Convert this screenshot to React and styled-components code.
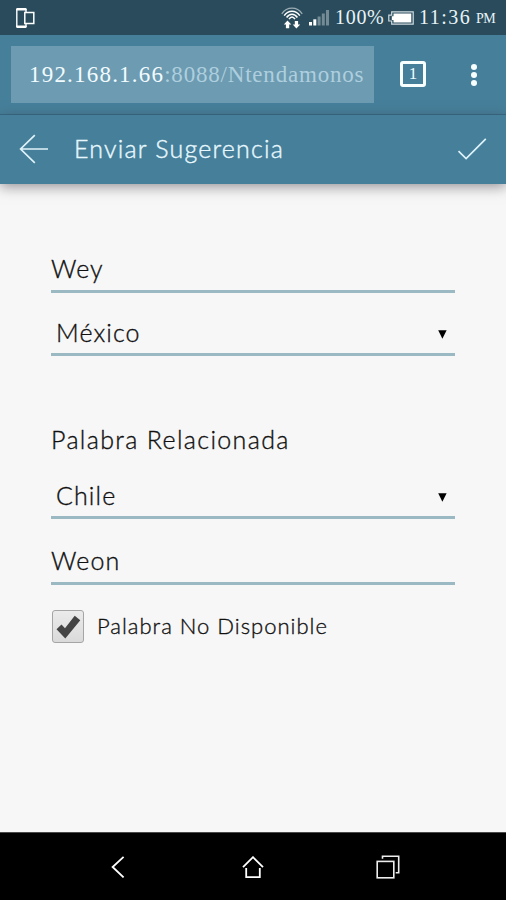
import React, { useState } from 'react';
import styled, { createGlobalStyle } from 'styled-components';

const App = () => {
  const [unavailable, setUnavailable] = useState(true);

  return (
    <Screen>
      <GlobalStyle />
      <StatusBar>
        <DeviceIcon />
        <Spacer />
        <StatusIcons>
          <WifiIcon />
          <SignalIcon />
        </StatusIcons>
        <Battery>100%</Battery>
        <BatteryIcon />
        <Clock>11:36</Clock>
        <Meridiem>PM</Meridiem>
      </StatusBar>

      <BrowserBar>
        <AddressBar>
          <Host>192.168.1.66</Host>
          <Path>:8088/Ntendamonos</Path>
        </AddressBar>
        <TabCount>1</TabCount>
        <MenuButton aria-label="Menu">
          <Dot />
          <Dot />
          <Dot />
        </MenuButton>
      </BrowserBar>

      <AppBar>
        <BackIcon />
        <Title>Enviar Sugerencia</Title>
        <CheckIcon />
      </AppBar>

      <Form>
        <Field $height={53}>
          <FieldText $spacing={1}>Wey</FieldText>
        </Field>
        <Field $height={63} $select>
          <FieldText $spacing={1.1}>México</FieldText>
          <CaretIcon />
        </Field>
        <SectionLabel>Palabra Relacionada</SectionLabel>
        <Field $height={54} $select>
          <FieldText $spacing={1.1}>Chile</FieldText>
          <CaretIcon />
        </Field>
        <Field $height={66}>
          <FieldText $spacing={1.1}>Weon</FieldText>
        </Field>
        <CheckRow>
          <CheckBox
            role="checkbox"
            aria-checked={unavailable}
            onClick={() => setUnavailable(!unavailable)}
          >
            {unavailable && <TickIcon />}
          </CheckBox>
          <CheckLabel>Palabra No Disponible</CheckLabel>
        </CheckRow>
      </Form>

      <NavBar>
        <NavBackIcon />
        <NavHomeIcon />
        <NavRecentIcon />
      </NavBar>
    </Screen>
  );
};

const DeviceIcon = () => (
  <svg width="20" height="22" viewBox="0 0 20 22" fill="none" stroke="#fff">
    <path d="M2.3 2.2h8.2M2.3 19.8h8.2" strokeWidth="2.4" strokeLinecap="round" />
    <path d="M1.8 2v18M11 2v3M11 16v4" strokeWidth="1.4" />
    <rect x="9.8" y="5.5" width="9" height="11" strokeWidth="1.5" />
  </svg>
);

const WifiIcon = () => (
  <svg width="22" height="22" viewBox="0 0 22 22" fill="none" stroke="#fff">
    <path d="M.8 6.8C6-.8 16-.8 21.2 6.8" strokeWidth="1.3" opacity="0.55" />
    <path d="M3.2 8.6C7.2 2.8 14.8 2.8 18.8 8.6" strokeWidth="1.5" />
    <path d="M5.6 10.5C8.6 6 13.4 6 16.4 10.5" strokeWidth="1.5" />
    <path d="M8 12.2C9.8 9.3 12.2 9.3 14 12.2" strokeWidth="1.5" />
    <path d="M6.5 13.6l3.8 4H8.2v3.6H4.9v-3.6H2.8zM15.4 21.5l3.8-4h-2.1v-3.6h-3.3v3.6h-2.1z" fill="#fff" stroke="none" />
  </svg>
);

const SignalIcon = () => (
  <svg width="20" height="17" viewBox="0 0 20 17" fill="#fff">
    <rect x="0" y="13" width="3" height="3.5" />
    <rect x="4.3" y="10.3" width="3" height="6.2" />
    <g opacity="0.35">
      <rect x="8.6" y="7.5" width="3" height="9" />
      <rect x="12.8" y="4.5" width="3" height="12" />
      <rect x="17" y="1" width="3" height="15.5" />
    </g>
  </svg>
);

const BatteryIcon = () => (
  <svg width="26" height="14" viewBox="0 0 26 14">
    <path d="M3.7.8h21.5v12.4H3.7V10H.8V4.2h2.9z" fill="none" stroke="#cfdce2" strokeWidth="1.2" />
    <path d="M5.5 2.5h17.8v9H5.5V9H3.8V5.2h1.7z" fill="#fff" />
  </svg>
);

const BackIcon = () => (
  <svg width="30" height="30" viewBox="0 0 30 30" fill="none" stroke="#dff3fa" strokeWidth="1.7">
    <path d="M15.8 1.2L1.6 15l14.2 13.8M1.6 15H29" />
  </svg>
);

const CheckIcon = () => (
  <svg width="30" height="24" viewBox="0 0 30 24" fill="none" stroke="#dff3fa" strokeWidth="1.7">
    <path d="M1.5 14.2l7.6 7.4L28.8 1.8" />
  </svg>
);

const CaretIcon = () => (
  <svg width="9" height="9" viewBox="0 0 9 9">
    <path d="M.2.3h8.4L4.4 8.7z" fill="#000" />
  </svg>
);

const TickIcon = () => (
  <svg width="25" height="24" viewBox="0 0 25 24">
    <path d="M.5 14.3l5-4.8L9 13.2 18.7.8l5.6 4.4L9.3 23.6z" fill="#444" />
  </svg>
);

const NavBackIcon = () => (
  <svg width="14" height="22" viewBox="0 0 14 22" fill="none" stroke="#fff" strokeWidth="1.8">
    <path d="M12.6.8L1.6 11l11 10.4" />
  </svg>
);

const NavHomeIcon = () => (
  <svg width="22" height="22" viewBox="0 0 22 22" fill="none" stroke="#fff" strokeWidth="1.8">
    <path d="M1 11.2L11 1.2l10 10M4.2 12v9.1h13.6V12" />
  </svg>
);

const NavRecentIcon = () => (
  <svg width="24" height="24" viewBox="0 0 24 24" fill="none" stroke="#eee" strokeWidth="1.6">
    <rect x="1.2" y="6.4" width="16.6" height="16.4" />
    <path d="M6.5 3.8V1.2h16.2v16.6h-3" />
  </svg>
);

const GlobalStyle = createGlobalStyle`
  * {
    box-sizing: border-box;
  }

  body {
    margin: 0;
    background: #f7f7f7;
  }

  svg {
    display: block;
    flex-shrink: 0;
  }
`;

const Screen = styled.div`
  display: flex;
  flex-direction: column;
  width: 506px;
  height: 900px;
  overflow: hidden;
  background: #f7f7f7;
  font-family: Lato, 'Open Sans', sans-serif;
  font-weight: 300;
  color: #111;
`;

const StatusBar = styled.div`
  display: flex;
  align-items: center;
  height: 35px;
  flex-shrink: 0;
  padding: 0 10px 0 15px;
  background: #294b5b;
  color: #e8f4f8;
  font-family: 'Liberation Serif', serif;
  font-size: 20px;
  line-height: 35px;
  white-space: nowrap;
`;

const Spacer = styled.div`
  flex: 1;
`;

const StatusIcons = styled.div`
  display: flex;
  align-items: center;
  gap: 6px;
`;

const Battery = styled.span`
  width: 53px;
  margin-left: 6px;
  letter-spacing: 0.7px;
`;

const Clock = styled.span`
  width: 52px;
  margin-left: 5px;
  letter-spacing: 1.5px;
`;

const Meridiem = styled.span`
  width: 20px;
  margin-left: 5px;
  padding-top: 2px;
  font-size: 14px;
  letter-spacing: -0.5px;
`;

const BrowserBar = styled.div`
  display: flex;
  align-items: center;
  height: 80px;
  flex-shrink: 0;
  padding: 0 29px 1px 11px;
  background: #467f9a;
  border-bottom: 1px solid #366a86;
`;

const AddressBar = styled.div`
  display: flex;
  align-items: center;
  width: 363px;
  height: 57px;
  padding: 1px 0 0 18px;
  background: #6d9bb1;
  font-family: 'Liberation Serif', serif;
  font-size: 23px;
  white-space: nowrap;
`;

const Host = styled.span`
  color: #f2fbff;
  letter-spacing: 1.2px;
`;

const Path = styled.span`
  color: #aecfdf;
  letter-spacing: 0.8px;
`;

const TabCount = styled.div`
  display: flex;
  align-items: center;
  justify-content: center;
  width: 26px;
  height: 26px;
  margin-left: 26px;
  border: 3px solid #f8ffff;
  border-radius: 3px;
  color: #f2fbff;
  font-family: 'Liberation Serif', serif;
  font-size: 17px;
`;

const MenuButton = styled.div`
  display: flex;
  flex-direction: column;
  align-items: center;
  gap: 2px;
  margin-left: auto;
  padding-top: 1px;
`;

const Dot = styled.span`
  width: 6px;
  height: 6px;
  border-radius: 50%;
  background: #f8ffff;
`;

const AppBar = styled.div`
  display: flex;
  align-items: center;
  height: 69px;
  flex-shrink: 0;
  padding: 0 19px 2px;
  background: #467f9a;
  box-shadow: 0 3px 12px rgba(60, 50, 60, 0.5);
`;

const Title = styled.h1`
  flex: 1;
  margin: 0 0 1px 25px;
  color: #e6f8fe;
  font-size: 25px;
  font-weight: 300;
  line-height: 30px;
  letter-spacing: 1.2px;
  -webkit-text-stroke: 0.4px currentColor;
`;

const Form = styled.div`
  display: flex;
  flex-direction: column;
  flex: 1;
  padding: 56px 51px 0;
  -webkit-text-stroke: 0.35px currentColor;
`;

const Field = styled.div`
  display: flex;
  align-items: flex-end;
  justify-content: space-between;
  height: ${({ $height }) => $height}px;
  padding: ${({ $select }) => ($select ? '0 8px 6px 5px' : '0 0 7px')};
  border-bottom: 3px solid #9bb9c3;

  svg {
    margin-bottom: 8px;
  }
`;

const FieldText = styled.span`
  font-size: 25px;
  line-height: 30px;
  letter-spacing: ${({ $spacing }) => $spacing}px;
`;

const SectionLabel = styled.h2`
  margin: 68px 0 11px;
  font-size: 25px;
  font-weight: 300;
  line-height: 30px;
  letter-spacing: 1.35px;
`;

const CheckRow = styled.div`
  display: flex;
  align-items: center;
  gap: 13px;
  margin: 25px 0 0 1px;
`;

const CheckBox = styled.div`
  display: flex;
  align-items: center;
  justify-content: center;
  width: 32px;
  height: 33px;
  border: 1px solid #a5a5a5;
  border-radius: 3px;
  background: linear-gradient(#ebebeb, #dadada);
`;

const CheckLabel = styled.span`
  margin-bottom: 1px;
  font-size: 22px;
  line-height: 28px;
  letter-spacing: 1px;
`;

const NavBar = styled.div`
  display: grid;
  grid-template-columns: 131px 134px 1fr;
  align-items: center;
  height: 68px;
  flex-shrink: 0;
  padding-left: 111px;
  border-top: 1px solid #4a4a4a;
  background: #000;
`;

export default App;
